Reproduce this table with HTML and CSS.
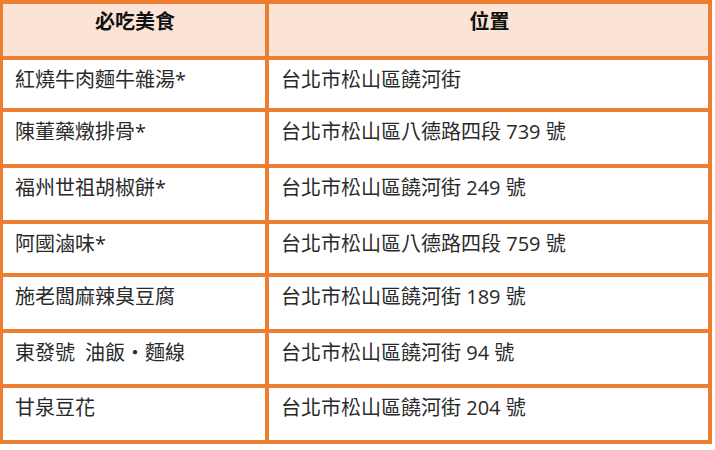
FILE: index.html
```html
<!DOCTYPE html>
<html lang="zh-Hant">
<head>
<meta charset="utf-8">
<title>必吃美食</title>
<link rel="stylesheet" href="styles.css">
</head>
<body>
<table class="food-table">
  <colgroup>
    <col class="col-name">
    <col class="col-place">
  </colgroup>
  <thead>
    <tr class="head-row">
      <th>必吃美食</th>
      <th>位置</th>
    </tr>
  </thead>
  <tbody>
    <tr class="row-first"><td>紅燒牛肉麵牛雜湯*</td><td>台北市松山區饒河街</td></tr>
    <tr><td>陳董藥燉排骨*</td><td>台北市松山區八德路四段 739 號</td></tr>
    <tr><td>福州世祖胡椒餅*</td><td>台北市松山區饒河街 249 號</td></tr>
    <tr class="row-short"><td>阿國滷味*</td><td>台北市松山區八德路四段 759 號</td></tr>
    <tr><td>施老闆麻辣臭豆腐</td><td>台北市松山區饒河街 189 號</td></tr>
    <tr class="row-mid"><td>東發號&ensp;油飯・麵線</td><td>台北市松山區饒河街 94 號</td></tr>
    <tr><td>甘泉豆花</td><td>台北市松山區饒河街 204 號</td></tr>
  </tbody>
</table>
</body>
</html>
```

FILE: styles.css
```css
html, body {
  margin: 0;
  padding: 0;
  background: #ffffff;
}

.food-table {
  margin-left: -1px;
  border-collapse: separate;
  border-spacing: 0;
  table-layout: fixed;
  width: 713px;
  font-family: "Open Sans", "Noto Sans CJK TC", sans-serif;
  font-size: 20px;
  line-height: 24px;
  color: #2a2a2a;
}

.col-name { width: 270px; }
.col-place { width: 443px; }

.food-table th,
.food-table td {
  box-sizing: border-box;
  border-right: 4px solid #ED7D31;
  border-bottom: 4px solid #ED7D31;
  vertical-align: top;
  padding: 8px 10px 0 12px;
  height: 56px;
}

.food-table th:first-child,
.food-table td:first-child {
  border-left: 4px solid #ED7D31;
}

.food-table th {
  border-top: 4px solid #ED7D31;
  background: #FBE4D5;
  font-weight: bold;
  color: #111111;
  text-align: center;
  padding-top: 6px;
  height: 60px;
}

.food-table td {
  text-align: left;
}

.food-table .row-first td { height: 52px; }
.food-table .row-short td { height: 53px; }
.food-table .row-mid td { height: 55px; }
```
